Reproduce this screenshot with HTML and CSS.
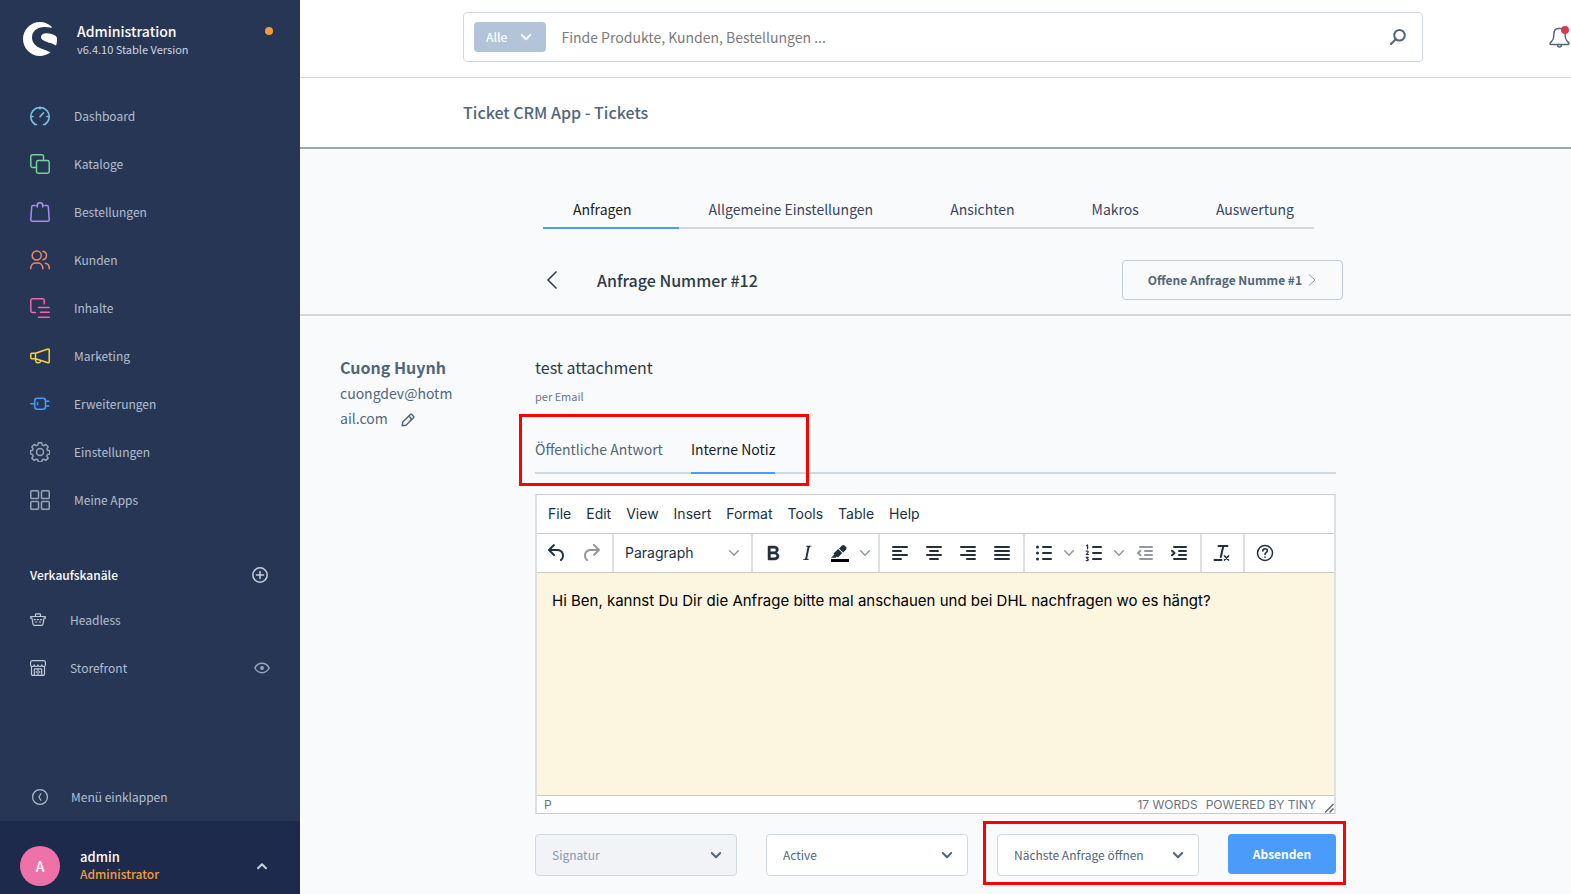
FILE: index.html
```html
<!DOCTYPE html>
<html lang="de">
<head>
<meta charset="utf-8">
<meta name="viewport" content="width=device-width, initial-scale=1">
<title>Ticket CRM App - Tickets</title>
<link rel="stylesheet" href="styles.css">
</head>
<body>
<div class="app">
  <aside class="sidebar">
    <div class="brand">
      <svg class="brand-logo" viewBox="0 0 34 34" aria-hidden="true"><path fill="#fff" d="M28.5 4.6C25.500 1.700 21.500 0 17 0 7.600 0 0 7.600 0 17s7.600 17 17 17c3.700 0 7.200-1.200 10-3.200.3-.3.2-.7-.2-.8-4.500-2.200-9.300-3.200-12.800-5.500C10.500 22.200 9 18.900 9 15.300 9 9.200 14 4.900 21.500 4.900c2.300 0 4.500.2 6.500.8.700.1.900-.6.500-1.100zM33.900 16c-.1-1-.6-1.700-1.400-2.300-2.300-1.500-5.500-2.500-8.800-2.500-3.100 0-5.700 1.400-5.700 3.700 0 3.500 5.200 4.700 9.500 6.200 1.800.6 3.300 1.300 4.900 2.200.4.200.8 0 .9-.4.600-2.200.8-4.700.6-6.900z"/></svg>
      <div class="brand-text">
        <div class="brand-name">Administration</div>
        <div class="brand-version">v6.4.10 Stable Version</div>
      </div>
      <span class="brand-dot"></span>
    </div>

    <nav class="menu">
      <a class="menu-item cyan" href="#"><svg class="icon" viewBox="0 0 20 20"><path d="M6.500 18.500H5.200A9.200 9.200 0 1 1 14.800 18.500H13.500M10 1v2M1 10.500h2M17 10.500h2M10 10.700l3.500-4"/></svg>Dashboard</a>
      <a class="menu-item green" href="#"><svg class="icon" viewBox="0 0 20 20"><path d="M6.500 13.500H2.500a1.700 1.700 0 0 1-1.700-1.700V2.500A1.700 1.700 0 0 1 2.500.8h9.300a1.700 1.700 0 0 1 1.700 1.700v4"/><rect x="6.500" y="6.500" width="12.700" height="12.700" rx="1.700"/></svg>Kataloge</a>
      <a class="menu-item purple" href="#"><svg class="icon" viewBox="0 0 20 20"><path d="M5 3.500H3a1.300 1.300 0 0 0-1.300 1.200L.8 17.600a1.500 1.500 0 0 0 1.500 1.600h15.400a1.500 1.500 0 0 0 1.500-1.600l-.9-12.900A1.300 1.300 0 0 0 17 3.500h-2M7.300 5V3.200a2.700 2.500 0 0 1 5.400 0V5M7.300 3.500h-.8M13.500 3.500h-.8"/></svg>Bestellungen</a>
      <a class="menu-item orange" href="#"><svg class="icon" viewBox="0 0 20 20"><circle cx="6.700" cy="5.500" r="4.500"/><path d="M.8 18.800v-1.300a5 5 0 0 1 5-4.500h2a5 5 0 0 1 5 4.500v1.300M13 1.200a4.400 4.400 0 0 1 0 8.600M15.500 13.300a4.700 4.700 0 0 1 3.700 4.500v1"/></svg>Kunden</a>
      <a class="menu-item pink" href="#"><svg class="icon" viewBox="0 0 20 20"><path d="M5.500 14.500H2.500a1.700 1.700 0 0 1-1.700-1.700V2.500A1.700 1.700 0 0 1 2.500.8h10a1.700 1.700 0 0 1 1.700 1.700v3.300M8.500 9.500h10.700M10.500 14.300h8.700M8.500 19.200h10.700"/></svg>Inhalte</a>
      <a class="menu-item yellow" href="#"><svg class="icon" viewBox="0 0 20 20"><path d="M5.500 7.300 18 3a.9.9 0 0 1 1.200.9v12a.9.900 0 0 1-1.200.9L5.500 12.700zM5.500 7.300H1.700a.9.900 0 0 0-.9.900v3.600a.9.900 0 0 0 .9.900h3.800M5.600 13v1.500a2.600 2.600 0 0 0 5 .7"/></svg>Marketing</a>
      <a class="menu-item blue" href="#"><svg class="icon" viewBox="0 0 20 20"><path d="M.8 9.700H4.500M15.500 7.200h3.300M15.500 12h3.300M7.500 8.700v2"/><rect x="4.700" y="4.200" width="10.800" height="11" rx="2.500"/></svg>Erweiterungen</a>
      <a class="menu-item gray" href="#"><svg class="icon" viewBox="0 0 20 20"><circle cx="10" cy="10" r="3.500"/><path d="M8.300.8h3.400l.6 2.300 1.500.6 2-1.200 2.300 2.300-1.200 2 .6 1.500 2.300.5v3.100l-2.300.6-.6 1.500 1.200 2.100-2.300 2.300-2-1.200-1.500.6-.6 2.200H8.300l-.5-2.200-1.600-.6-2 1.200-2.300-2.300 1.200-2.100-.6-1.500-2-.6V8.800l2-.5.6-1.500-1.200-2 2.300-2.300 2 1.200 1.600-.6z"/></svg>Einstellungen</a>
      <a class="menu-item gray" href="#"><svg class="icon" viewBox="0 0 20 20"><rect x=".8" y=".8" width="7.700" height="7.700" rx=".8"/><rect x="11.500" y=".8" width="7.700" height="7.700" rx=".8"/><rect x=".8" y="11.500" width="7.700" height="7.700" rx=".8"/><rect x="11.500" y="11.500" width="7.700" height="7.700" rx=".8"/></svg>Meine Apps</a>
    </nav>

    <section class="channels">
      <div class="channels-head">
        <h2 class="channels-title">Verkaufskanäle</h2>
        <button class="plain-button" type="button" aria-label="Verkaufskanal hinzufügen"><svg class="icon-small" viewBox="0 0 16 16"><circle cx="8" cy="8" r="7.200"/><path d="M8 4.500v7M4.500 8h7"/></svg></button>
      </div>
      <a class="channel" href="#"><svg class="icon-small thin" viewBox="0 0 16 16"><path d="M.7 4.500h14.600v1.700H14l-1 6a1.500 1.500 0 0 1-1.400 1.200H4.400A1.500 1.500 0 0 1 3 12.200l-1-6H.7zM5.500 4.200V2.600A.8.800 0 0 1 6.300 1.800h3.400a.8.800 0 0 1 .8.800v1.600M4.300 7.700h1.200M7.400 7.700h1.200M10.500 7.700h1.200M5.500 10h1.200M9.300 10h1.200"/></svg><span class="channel-name">Headless</span></a>
      <a class="channel" href="#"><svg class="icon-small thin" viewBox="0 0 16 16"><path d="M1.500 6.500V14a1.300 1.300 0 0 0 1.300 1.400h10.400a1.300 1.300 0 0 0 1.300-1.400V6.500M.6 5V2.400A1.800 1.800 0 0 1 2.400.6h11.200a1.800 1.800 0 0 1 1.800 1.800V5c0 .8-.7 1.500-1.500 1.500h-.3c-1 0-1.700-1-1.800-1.700-.2.900-1 1.700-1.900 1.700S8.200 5.800 8 4.800c-.2 1-1 1.700-1.900 1.700S4.400 5.700 4.200 4.800c-.1.700-.8 1.700-1.800 1.700h-.3C1.300 6.500.6 5.800.6 5zM4.300 15.300V9.600a.8.800 0 0 1 .8-.8h5.800a.8.800 0 0 1 .8.800v5.700M8 9v6.200M6.300 11.500v1M9.700 11.500v1"/></svg><span class="channel-name">Storefront</span><svg class="icon-small eye" viewBox="0 0 16 16"><path d="M.8 8C2.500 4.900 5 3.300 8 3.300S13.500 4.900 15.200 8C13.500 11.100 11 12.700 8 12.700S2.500 11.100.8 8z"/><circle cx="8" cy="8" r="1.200" fill="currentColor"/></svg></a>
    </section>

    <button class="collapse" type="button"><svg class="icon-small thin" viewBox="0 0 16 16"><circle cx="8" cy="8" r="7.400"/><path d="M8.800 4.800 7 8l1.800 3.200"/></svg>Menü einklappen</button>

    <button class="user" type="button">
      <span class="avatar">A</span>
      <span class="user-text"><span class="user-name">admin</span><span class="user-role">Administrator</span></span>
      <svg class="user-arrow" viewBox="0 0 12 12"><path d="M2 8.200 6 4.200l4 4"/></svg>
    </button>
  </aside>

  <div class="main">
    <header class="topbar">
      <form class="search" role="search">
        <button class="search-type" type="button">Alle<svg class="arrow" viewBox="0 0 12 12"><path d="M1.800 4 6 8.200 10.200 4"/></svg></button>
        <input class="search-input" type="search" aria-label="Suche" placeholder="Finde Produkte, Kunden, Bestellungen ...">
        <button class="plain-button search-go" type="submit" aria-label="Suchen"><svg class="icon-small" viewBox="0 0 16 16"><circle cx="9.500" cy="6.300" r="5.300"/><path d="M5.700 10.200 1 15"/></svg></button>
      </form>
      <button class="plain-button bell" type="button" aria-label="Benachrichtigungen"><svg class="bell-icon" viewBox="0 0 22 24"><path d="M9.500 3.500C6 3.500 4.900 6 4.900 9c0 5.500-1.300 6.400-3.400 8.500-.9 1-.4 2 .7 2h16.600c1.100 0 1.600-1 .7-2-2.100-2.100-3.400-3-3.400-8.500 0-3-1.700-5.500-5-5.500zM8.500 20a2 2 0 0 0 4 0"/><circle cx="16" cy="5" r="4" fill="#d43b4e" stroke="none"/></svg></button>
    </header>

    <div class="titlebar"><h1 class="app-title">Ticket CRM App - Tickets</h1></div>

    <main class="page">
      <nav class="tabs">
        <a class="tab active" href="#">Anfragen</a>
        <a class="tab" href="#">Allgemeine Einstellungen</a>
        <a class="tab" href="#">Ansichten</a>
        <a class="tab" href="#">Makros</a>
        <a class="tab" href="#">Auswertung</a>
      </nav>

      <div class="ticket-head">
        <button class="plain-button back" type="button" aria-label="Zurück"><svg class="back-icon" viewBox="0 0 12 20"><path d="M10.500 1.500 2 10l8.500 8.500"/></svg></button>
        <h2 class="ticket-title">Anfrage Nummer #12</h2>
        <button class="next-ticket" type="button">Offene Anfrage Numme #1<svg class="next-icon" viewBox="0 0 8 14"><path d="M1 1.500 7 7l-6 5.500"/></svg></button>
      </div>

      <div class="ticket">
        <section class="customer">
          <div class="customer-name">Cuong Huynh</div>
          <div class="customer-mail">cuongdev@hotmail.com<button class="plain-button edit" type="button" aria-label="Bearbeiten"><svg class="edit-icon" viewBox="0 0 14 14"><path d="M1.200 12.800l.6-3.800 7.500-7.500a1 1 0 0 1 1.400 0l1.800 1.800a1 1 0 0 1 0 1.400L5 12.200zM8 3.300 10.700 6 9 7.700"/></svg></button></div>
        </section>

        <section class="reply">
          <h3 class="subject">test attachment</h3>
          <div class="via">per Email</div>

          <div class="reply-tabs">
            <div class="reply-tabs-group">
              <a class="reply-tab" href="#">Öffentliche Antwort</a>
              <a class="reply-tab active" href="#">Interne Notiz</a>
            </div>
          </div>

          <div class="editor">
            <div class="menubar">
              <button class="menubar-item" type="button">File</button><button class="menubar-item" type="button">Edit</button><button class="menubar-item" type="button">View</button><button class="menubar-item" type="button">Insert</button><button class="menubar-item" type="button">Format</button><button class="menubar-item" type="button">Tools</button><button class="menubar-item" type="button">Table</button><button class="menubar-item" type="button">Help</button>
            </div>
            <div class="toolbar">
              <div class="tool-group">
                <button class="tool" type="button" aria-label="Undo"><svg viewBox="0 0 24 24"><path d="M6.400 8H12c3.700 0 6.200 2 6.800 5.100.6 2.700-.4 5.600-2.300 6.800a1 1 0 0 1-1-1.800c1.100-.6 1.800-2.700 1.400-4.600-.5-2.100-2.100-3.500-4.900-3.500H6.400l3.300 3.300a1 1 0 1 1-1.400 1.400l-5-5a1 1 0 0 1 0-1.400l5-5a1 1 0 0 1 1.400 1.400L6.400 8z"/></svg></button>
                <button class="tool off" type="button" aria-label="Redo" disabled><svg viewBox="0 0 24 24"><path d="M17.600 10H12c-2.800 0-4.400 1.400-4.900 3.500-.4 2 .3 4 1.400 4.600a1 1 0 1 1-1 1.800c-2-1.200-2.900-4.100-2.300-6.800.6-3 3-5.100 6.800-5.100h5.600l-3.300-3.300a1 1 0 1 1 1.400-1.400l5 5a1 1 0 0 1 0 1.400l-5 5a1 1 0 0 1-1.400-1.400l3.300-3.300z"/></svg></button>
              </div>
              <div class="tool-group">
                <button class="block-format" type="button">Paragraph<svg class="caret" viewBox="0 0 10 10"><path d="M.7 2.800 5 7.200l4.300-4.400"/></svg></button>
              </div>
              <div class="tool-group">
                <button class="tool" type="button" aria-label="Bold"><svg viewBox="0 0 24 24"><path fill-rule="evenodd" stroke="currentColor" stroke-width=".5" d="M7.800 19c-.3 0-.5 0-.6-.2l-.2-.5V5.700c0-.2 0-.4.200-.5l.6-.2h5c1.500 0 2.700.3 3.500 1 .7.600 1.100 1.400 1.100 2.500a3 3 0 0 1-.6 1.900c-.4.600-1 1-1.600 1.200.4.100.9.300 1.300.6s.8.700 1 1.200c.4.400.5 1 .5 1.600 0 1.300-.4 2.300-1.300 3-.8.700-2.100 1-3.800 1H7.800zm5-8.300c.6 0 1.200-.1 1.600-.5.4-.3.600-.7.600-1.300 0-1.100-.8-1.700-2.300-1.700H9.300v3.500h3.400zm.5 6c.7 0 1.300-.1 1.700-.4.400-.4.600-.9.600-1.500s-.2-1-.7-1.400c-.4-.3-1-.4-2-.4H9.400v3.800h4z"/></svg></button>
                <button class="tool" type="button" aria-label="Italic"><svg viewBox="0 0 24 24"><path d="M16.700 4.700l-.1.900h-.3c-.6 0-1 0-1.400.3-.3.300-.4.600-.5 1.100l-2.100 9.800v.6c0 .5.400.8 1.400.8h.2l-.2.800H8l.2-.8h.2c1.100 0 1.800-.5 2-1.500l2-9.800.1-.5c0-.6-.4-.8-1.400-.8h-.3l.2-.9h5.700z"/></svg></button>
                <button class="tool split" type="button" aria-label="Background color"><svg viewBox="0 0 24 24"><path fill="#000" d="M3 18h18v3H3z"/><path d="M7.700 16.700H3l3.300-3.300-.7-.8L10.200 8l4 4.100-4 4.200c-.2.200-.6.200-.8 0l-.6-.7-1.100 1.100zm5-7.500L11 7.400l3-2.900a2 2 0 0 1 2.600 0L18 6c.7.700.7 2 0 2.700l-2.900 2.900-1.800-1.800z"/></svg><svg class="caret" viewBox="0 0 10 10"><path d="M.7 2.800 5 7.200l4.300-4.400"/></svg></button>
              </div>
              <div class="tool-group">
                <button class="tool" type="button" aria-label="Align left"><svg class="lines" viewBox="0 0 24 24"><path d="M5 6h14M5 10h8M5 14h14M5 18h8"/></svg></button>
                <button class="tool" type="button" aria-label="Align center"><svg class="lines" viewBox="0 0 24 24"><path d="M5 6h14M8 10h8M5 14h14M8 18h8"/></svg></button>
                <button class="tool" type="button" aria-label="Align right"><svg class="lines" viewBox="0 0 24 24"><path d="M5 6h14M11 10h8M5 14h14M11 18h8"/></svg></button>
                <button class="tool" type="button" aria-label="Justify"><svg class="lines" viewBox="0 0 24 24"><path d="M5 6h14M5 10h14M5 14h14M5 18h14"/></svg></button>
              </div>
              <div class="tool-group">
                <button class="tool split" type="button" aria-label="Bullet list"><svg class="lines" viewBox="0 0 24 24"><path d="M11 6h8M11 12h8M11 18h8"/><path stroke-width="3" d="M5.500 6h.01M5.500 12h.01M5.500 18h.01"/></svg><svg class="caret" viewBox="0 0 10 10"><path d="M.7 2.800 5 7.200l4.300-4.400"/></svg></button>
                <button class="tool split" type="button" aria-label="Numbered list"><svg class="lines" viewBox="0 0 24 24"><path d="M11 6h8M11 12h8M11 18h8"/><path stroke-width="1.200" d="M4.500 4.700 5.600 4v3.800M4.200 10.300c1.200-.7 2.400 0 1.800 1L4.300 13.500h2.200M4.200 16.300h2L5 17.700c2 0 1.600 2.300-.8 1.800"/></svg><svg class="caret" viewBox="0 0 10 10"><path d="M.7 2.800 5 7.200l4.300-4.400"/></svg></button>
                <button class="tool off" type="button" aria-label="Decrease indent" disabled><svg class="lines" viewBox="0 0 24 24"><path d="M7 6h12M12 10h7M12 14h7M7 18h12M7.500 9.700 5 12l2.500 2.300"/></svg></button>
                <button class="tool" type="button" aria-label="Increase indent"><svg class="lines" viewBox="0 0 24 24"><path d="M7 6h12M12 10h7M12 14h7M7 18h12M5 9.700 7.500 12 5 14.300"/></svg></button>
              </div>
              <div class="tool-group">
                <button class="tool" type="button" aria-label="Clear formatting"><svg class="lines" viewBox="0 0 24 24"><path stroke-width="2" d="M8.500 5h9M13.300 5l-2.500 11M4.500 19h7"/><path stroke-width="1.700" d="M14.500 15l4 4M18.500 15l-4 4"/></svg></button>
              </div>
              <div class="tool-group">
                <button class="tool" type="button" aria-label="Help"><svg class="lines" viewBox="0 0 24 24"><circle cx="12" cy="12" r="7.500" stroke-width="1.500"/><path stroke-width="1.600" d="M9.800 10c0-3 4.600-3 4.600-.3 0 1.700-2.400 1.700-2.400 3.700M12 16v.2"/></svg></button>
              </div>
            </div>
            <div class="editor-body" contenteditable="true" role="textbox" aria-label="Interne Notiz">Hi Ben, kannst Du Dir die Anfrage bitte mal anschauen und bei DHL nachfragen wo es hängt?</div>
            <div class="statusbar">
              <span class="status-path">P</span><span>17 WORDS</span><a class="powered" href="#">POWERED BY TINY</a>
              <svg class="resize" viewBox="0 0 10 10"><path d="M1 9.500 9.500 1M5.500 9.500l4-4"/></svg>
            </div>
          </div>

          <div class="actions">
            <div class="select-wrap"><select class="select" aria-label="Signatur" disabled><option>Signatur</option></select><svg class="arrow" viewBox="0 0 12 12"><path d="M1.800 4 6 8.200 10.200 4"/></svg></div>
            <div class="select-wrap"><select class="select" aria-label="Status"><option>Active</option></select><svg class="arrow" viewBox="0 0 12 12"><path d="M1.800 4 6 8.200 10.200 4"/></svg></div>
            <div class="submit-group">
              <div class="select-wrap"><select class="select" aria-label="Nach dem Absenden"><option>Nächste Anfrage öffnen</option></select><svg class="arrow" viewBox="0 0 12 12"><path d="M1.800 4 6 8.200 10.200 4"/></svg></div>
              <button class="submit" type="button">Absenden</button>
            </div>
          </div>
        </section>
      </div>
    </main>
  </div>
</div>
</body>
</html>
```
FILE: styles.css
```css
* { box-sizing: border-box; }

body {
  margin: 0;
  font-family: "Noto Sans CJK SC", "Noto Sans", sans-serif;
  font-size: 14px;
  line-height: 20px;
  color: #52667a;
  background: #f9fafc;
}

h1, h2, h3 { margin: 0; font-weight: 500; }
a { color: inherit; text-decoration: none; }
button, input, select { font: inherit; color: inherit; }
button { cursor: pointer; }
svg { display: block; flex: none; }

.plain-button { display: flex; padding: 0; border: 0; background: none; }

.app { display: flex; min-height: 100vh; }

/* Sidebar */
.sidebar {
  display: flex;
  flex-direction: column;
  flex: none;
  width: 300px;
  color: #b3bfd0;
  background: #283655;
  font-size: 12px;
}

.brand { display: flex; align-items: flex-start; padding: 22px 27px 0 23px; height: 92px; }
.brand-logo { width: 34px; height: 34px; }
.brand-text { flex: 1; padding-left: 20px; }
.brand-name { color: #fff; font-size: 14px; font-weight: 500; line-height: 18px; }
.brand-version { color: #cdd5e0; font-size: 11px; line-height: 18px; }
.brand-dot { width: 8px; height: 8px; margin-top: 5px; border-radius: 50%; background: #f29e38; }

.menu-item { display: flex; align-items: center; gap: 24px; height: 48px; padding-left: 30px; }
.icon { width: 20px; height: 20px; }
.icon, .icon-small { fill: none; stroke: currentColor; stroke-width: 1.5; stroke-linecap: round; stroke-linejoin: round; }
.icon-small { width: 16px; height: 16px; }
.thin { stroke-width: 1.2; }
.cyan .icon { color: #76c8e8; }
.green .icon { color: #6fd39a; }
.purple .icon { color: #a48df0; }
.orange .icon { color: #ea8a64; }
.pink .icon { color: #ee66ae; }
.yellow .icon { color: #f7d443; }
.blue .icon { color: #4a9bf5; }
.gray .icon { color: #98a4b3; }

.channels { padding: 40px 30px 0; }
.channels-head { display: flex; justify-content: space-between; align-items: center; height: 22px; margin-bottom: 10px; padding-right: 2px; color: #c6d0de; }
.channels-title { color: #fff; font-size: 12px; }
.channel { display: flex; align-items: center; gap: 24px; height: 48px; }
.channel .thin { color: #c0cad8; }
.channel-name { flex: 1; }
.eye { color: #98a6ba; }

.collapse {
  display: flex;
  align-items: center;
  gap: 23px;
  height: 48px;
  margin-top: auto;
  padding: 0 32px;
  border: 0;
  background: none;
}

.user {
  display: flex;
  align-items: center;
  height: 73px;
  padding: 16px 32px 0 20px;
  border: 0;
  background: #1d2a4b;
  text-align: left;
}
.avatar { width: 40px; height: 40px; border-radius: 50%; background: #ee72a8; color: #fff; font-size: 14px; font-weight: 500; line-height: 40px; text-align: center; }
.user-text { flex: 1; padding: 0 0 2px 20px; font-weight: 500; }
.user-name, .user-role { display: block; line-height: 17px; }
.user-name { color: #fff; font-size: 13px; }
.user-role { color: #f29e38; }
.user-arrow { width: 12px; height: 12px; fill: none; stroke: #c6d0de; stroke-width: 2; stroke-linecap: round; stroke-linejoin: round; }

/* Header */
.main { display: flex; flex-direction: column; flex: 1; min-width: 0; }
.topbar {
  display: flex;
  align-items: center;
  height: 78px;
  padding: 0 0 4px 163px;
  border-bottom: 1px solid #d6dbdf;
  background: #fff;
}
.search { display: flex; flex: 1; align-items: center; height: 50px; margin-right: 126px; padding: 0 16px 0 10px; border: 1px solid #d1d9e0; border-radius: 4px; }
.search-type { display: flex; align-items: center; gap: 13px; height: 30px; padding: 0 14px 0 12px; border: 0; border-radius: 4px; background: #b3c3d9; color: #fff; font-size: 12px; font-weight: 500; }
.arrow { width: 12px; height: 12px; fill: none; stroke: currentColor; stroke-width: 2; stroke-linecap: round; stroke-linejoin: round; }
.search-input { flex: 1; min-width: 0; padding: 0 15px; border: 0; outline: 0; background: none; appearance: none; }
.search-input::placeholder { color: #7b7b7b; }
.search-go .icon-small { stroke-width: 2; }
.bell { width: 22px; overflow: visible; }
.bell-icon { width: 22px; height: 24px; fill: none; stroke: #52667a; stroke-width: 1.5; stroke-linejoin: round; }

.titlebar { display: flex; align-items: center; height: 71px; padding: 0 163px 2px; border-bottom: 2px solid #9aa8b5; background: #fff; }
.app-title { font-size: 16px; }

/* Ticket page */
.tabs { display: flex; width: max-content; margin: 46px 0 0 243px; box-shadow: inset 0 -2px #d1d9e0; color: #3a4560; }
.tab { padding: 4px 47px 10px 30px; line-height: 20px; }
.tab:last-child { padding-right: 20px; }
.tab.active { color: #1a1d21; border-bottom: 2px solid #4a9bfa; padding-bottom: 8px; }

.ticket-head { display: flex; align-items: center; height: 87px; padding: 28px 228px 12px 246px; border-bottom: 2px solid #d1d9e0; }
.back-icon { width: 12px; height: 20px; fill: none; stroke: #303a45; stroke-width: 1.500; }
.ticket-title { flex: 1; padding-left: 39px; color: #303a45; font-size: 16px; }
.next-ticket { display: flex; align-items: center; gap: 6px; height: 40px; padding: 0 26px 0 25px; border: 1px solid #c3cddb; border-radius: 4px; background: none; font-size: 12px; font-weight: 700; }
.next-icon { width: 8px; height: 14px; fill: none; stroke: #8b9aab; }

.ticket { display: flex; padding: 39px 235px 0 40px; }
.customer { flex: none; width: 120px; margin-right: 75px; line-height: 25px; }
.customer-name { font-size: 16px; font-weight: 700; }
.customer-mail { display: flow-root; margin-top: 1px; word-break: break-all; }
.edit { display: inline-flex; margin-left: 13px; vertical-align: -3px; }
.edit-icon { width: 14px; height: 14px; fill: none; stroke: currentColor; stroke-width: 1.500; stroke-linejoin: round; }

.reply { flex: 1; min-width: 0; }
.subject { color: #303a45; font-size: 16px; font-weight: 400; line-height: 25px; }
.via { margin-top: 8px; color: #6a7889; font-size: 11px; line-height: 16px; }

.reply-tabs { display: flex; margin-top: 28px; box-shadow: inset 0 -2px #d1d9e0; }
.reply-tabs-group { position: relative; display: flex; gap: 28px; }
.reply-tab { height: 42px; padding-top: 7px; }
.reply-tab.active { color: #1a1d21; border-bottom: 2px solid #4a9bfa; }

/* Highlight frames */
.reply-tabs-group::after, .submit-group::after {
  content: "";
  position: absolute;
  border: 3px solid #f00;
  pointer-events: none;
}
.reply-tabs-group::after { inset: -18px -34px -12px -16px; }
.submit-group::after { inset: -13px -10px -9px -14px; }

/* Editor */
.editor { margin-top: 20px; border: 1px solid #c9cccf; border-width: 1px 2px; border-color: #c9cccf #dedfe1; background: #fff; color: #222f3e; font-family: Inter, "Liberation Sans", sans-serif; font-size: 14px; }
.menubar { display: flex; gap: 1px; height: 39px; padding: 0 4px; border-bottom: 1px solid #c9cccf; }
.menubar-item { padding: 0 7px; border: 0; background: none; }
.toolbar { display: flex; height: 39px; border-bottom: 1px solid #c9cccf; }
.tool-group { display: flex; padding: 0 4px 0 3px; border-right: 2px solid #dedfe1; }
.tool-group:last-child { border-right: 0; }
.tool { display: flex; align-items: center; justify-content: center; width: 34px; padding: 0; border: 0; background: none; color: #222f3e; }
.tool svg { width: 24px; height: 24px; fill: currentColor; }
.tool .lines { fill: none; stroke: currentColor; stroke-width: 2; stroke-linecap: round; stroke-linejoin: round; }
.tool.split { width: 50px; gap: 8px; }
.tool .caret, .caret { width: 10px; height: 10px; fill: none; stroke: #90979f; stroke-width: 1.500; stroke-linecap: round; }
.tool.off { color: #9297a0; }
.block-format { display: flex; align-items: center; justify-content: space-between; width: 130px; padding: 0 8px; border: 0; background: none; }
.editor-body { min-height: 222px; padding: 16px 15px; outline: 0; background: #fcf5df; color: #000; font-size: 15px; line-height: 24px; }
.statusbar { display: flex; align-items: center; gap: 8px; height: 18px; padding-left: 7px; border-top: 1px solid #c9cccf; color: #6a727d; font-size: 12px; line-height: 16px; }
.status-path { flex: 1; }
.resize { width: 10px; height: 10px; align-self: flex-end; fill: none; stroke: #5f6873; stroke-width: 1.500; }

.actions { display: flex; align-items: flex-start; gap: 29px; margin-top: 20px; font-size: 12px; }
.select-wrap { display: grid; flex: 1; align-items: center; }
.select-wrap > * { grid-area: 1 / 1; }
.select-wrap .arrow { justify-self: end; margin-right: 15px; pointer-events: none; }
.select { width: 100%; height: 42px; padding: 0 40px 0 16px; border: 1px solid #d1d9e0; border-radius: 4px; appearance: none; background: #fff; }
.select:disabled { background: #f1f3f7; color: #8b98a8; opacity: 1; }
.submit-group { position: relative; display: flex; flex: none; align-items: flex-start; gap: 29px; width: 339px; }
.submit { width: 108px; height: 40px; border: 0; border-radius: 4px; background: #4a9bfa; color: #fff; font-weight: 700; }
```
